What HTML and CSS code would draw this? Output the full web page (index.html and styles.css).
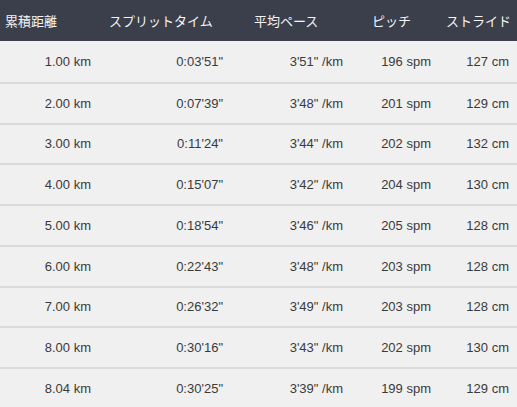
FILE: index.html
```html
<!DOCTYPE html>
<html lang="ja">
<head>
<meta charset="utf-8">
<link rel="stylesheet" href="styles.css">
</head>
<body>
<div class="table">
  <div class="row head">
    <div class="c1">累積距離</div>
    <div class="c2">スプリットタイム</div>
    <div class="c3">平均ペース</div>
    <div class="c4">ピッチ</div>
    <div class="c5">ストライド</div>
  </div>
  <div class="row"><div>1.00 km</div><div>0:03'51"</div><div>3'51" /km</div><div>196 spm</div><div>127 cm</div></div>
  <div class="row"><div>2.00 km</div><div>0:07'39"</div><div>3'48" /km</div><div>201 spm</div><div>129 cm</div></div>
  <div class="row"><div>3.00 km</div><div>0:11'24"</div><div>3'44" /km</div><div>202 spm</div><div>132 cm</div></div>
  <div class="row"><div>4.00 km</div><div>0:15'07"</div><div>3'42" /km</div><div>204 spm</div><div>130 cm</div></div>
  <div class="row"><div>5.00 km</div><div>0:18'54"</div><div>3'46" /km</div><div>205 spm</div><div>128 cm</div></div>
  <div class="row"><div>6.00 km</div><div>0:22'43"</div><div>3'48" /km</div><div>203 spm</div><div>128 cm</div></div>
  <div class="row"><div>7.00 km</div><div>0:26'32"</div><div>3'49" /km</div><div>203 spm</div><div>128 cm</div></div>
  <div class="row"><div>8.00 km</div><div>0:30'16"</div><div>3'43" /km</div><div>202 spm</div><div>130 cm</div></div>
  <div class="row"><div>8.04 km</div><div>0:30'25"</div><div>3'39" /km</div><div>199 spm</div><div>129 cm</div></div>
</div>
</body>
</html>
```
FILE: styles.css
```css
html, body {
  margin: 0;
  padding: 0;
  background: #f0f0f0;
}
.table {
  width: 517px;
  font-family: "Liberation Sans", Arial, sans-serif;
  font-size: 13px;
  color: #3a3a3a;
}
.row {
  display: grid;
  grid-template-columns: 100px 132px 120px 88px 77px;
  align-items: center;
  height: 40.75px;
  box-sizing: border-box;
}
.row > div {
  text-align: right;
  padding-right: 9px;
  white-space: nowrap;
}
.row > div:last-child {
  padding-right: 8px;
}
.row + .row {
  border-top: 2px solid #dadada;
}
.head {
  height: 41px;
  background: #3b3f4b;
  color: #f4f4f4;
  font-family: "Noto Sans CJK JP", "Noto Sans", sans-serif;
  font-size: 13px;
}
.head > div,
.head > div:last-child {
  text-align: left;
  padding-right: 0;
  padding-bottom: 1px;
}
.head .c1 { padding-left: 5px; }
.head .c2 { padding-left: 9px; }
.head .c3 { padding-left: 22px; }
.head .c4 { padding-left: 20px; }
.head .c5 { padding-left: 6px; }
.head + .row {
  border-top: 0;
}
```
